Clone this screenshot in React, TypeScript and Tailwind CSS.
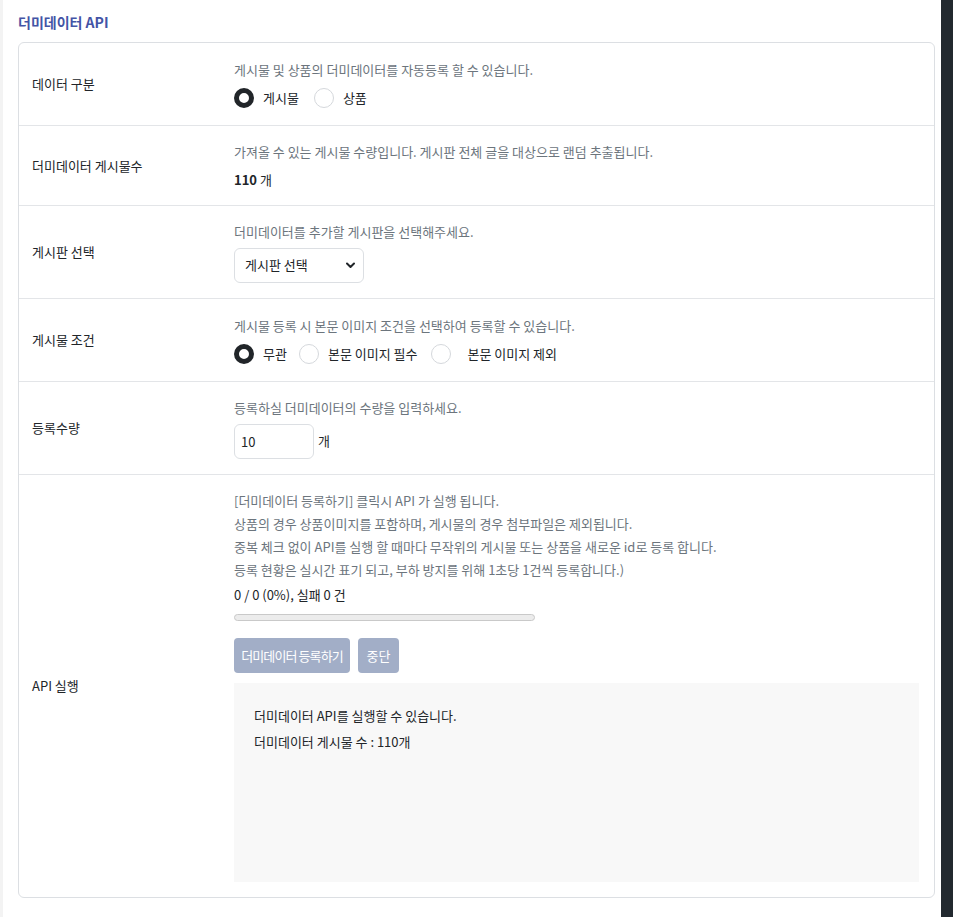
import { useState } from "react";

const font = { fontFamily: '"Noto Sans CJK KR", "Noto Sans", sans-serif' };

function Radio({ checked, label, className = "" }: { checked?: boolean; label: string; className?: string }) {
  return (
    <label className={`flex items-center ${className}`}>
      {checked ? (
        <span className="h-[20px] w-[20px] rounded-full border-[5px] border-[#212529] bg-white" />
      ) : (
        <span className="h-[20px] w-[20px] rounded-full border border-[#d5d8dc] bg-white" />
      )}
      <span className="ml-[9px] text-[13px] text-[#212529]">{label}</span>
    </label>
  );
}

function Row({
  label,
  children,
  last,
  height,
}: {
  label: string;
  children: React.ReactNode;
  last?: boolean;
  height: string;
}) {
  return (
    <div className={`flex ${height} ${last ? "" : "border-b border-[#e3e5e8]"}`}>
      <div className="flex w-[215px] shrink-0 items-center pl-[13px] text-[13px] text-[#212529]">{label}</div>
      <div className="flex flex-1 flex-col justify-center">{children}</div>
    </div>
  );
}

export default function App() {
  const [count, setCount] = useState("10");

  return (
    <div className="flex h-screen w-full bg-white leading-[20px]" style={font}>
      <div className="w-[3px] bg-[#f3f3f3]" />
      <div className="flex-1 pl-[15px] pr-[6px]">
        <h1 className="pt-[12px] pb-[10px] text-[14px] font-bold text-[#4354a6]">더미데이터 API</h1>
        <div className="rounded-[6px] border border-[#dcdfe3] bg-white">
          <Row label="데이터 구분" height="h-[83px]">
            <p className="text-[13px] text-[#6c757d]">게시물 및 상품의 더미데이터를 자동등록 할 수 있습니다.</p>
            <div className="mt-[8px] flex items-center">
              <Radio checked label="게시물" />
              <Radio label="상품" className="ml-[15px]" />
            </div>
          </Row>
          <Row label="더미데이터 게시물수" height="h-[80px]">
            <p className="text-[13px] text-[#6c757d]">
              가져올 수 있는 게시물 수량입니다. 게시판 전체 글을 대상으로 랜덤 추출됩니다.
            </p>
            <p className="mt-[8px] text-[13px] text-[#212529]">
              <b>110</b> 개
            </p>
          </Row>
          <Row label="게시판 선택" height="h-[93px]">
            <p className="text-[13px] text-[#6c757d]">더미데이터를 추가할 게시판을 선택해주세요.</p>
            <div className="relative mt-[6px] flex h-[35px] w-[130px] items-center rounded-[6px] border border-[#dcdfe3] pl-[10px] text-[13px] text-[#212529]">
              게시판 선택
              <svg className="absolute right-[8px] top-[13px]" width="9" height="7" viewBox="0 0 9 7">
                <path d="M1 1.5 L4.5 5 L8 1.5" fill="none" stroke="#212529" strokeWidth="2" strokeLinecap="round" strokeLinejoin="round" />
              </svg>
            </div>
          </Row>
          <Row label="게시물 조건" height="h-[83px]">
            <p className="text-[13px] text-[#6c757d]">게시물 등록 시 본문 이미지 조건을 선택하여 등록할 수 있습니다.</p>
            <div className="mt-[8px] flex items-center">
              <Radio checked label="무관" />
              <Radio label="본문 이미지 필수" className="ml-[12px]" />
              <Radio label=" 본문 이미지 제외" className="ml-[14px] [&>span:last-child]:ml-[16px]" />
            </div>
          </Row>
          <Row label="등록수량" height="h-[93px]">
            <p className="text-[13px] text-[#6c757d]">등록하실 더미데이터의 수량을 입력하세요.</p>
            <div className="mt-[6px] flex items-center">
              <input
                value={count}
                onChange={(e) => setCount(e.target.value)}
                className="h-[35px] w-[80px] rounded-[6px] border border-[#dcdfe3] px-[6px] text-[13px] text-[#212529] outline-none"
                style={font}
              />
              <span className="ml-[4px] text-[13px] text-[#212529]">개</span>
            </div>
          </Row>
          <Row label="API 실행" height="h-[422px]" last>
            <div className="flex h-full flex-col pt-[14px] pr-[15px] pb-[15px]">
              <div className="text-[13px] leading-[23px] text-[#6c757d]">
                <p>[더미데이터 등록하기] 클릭시 API 가 실행 됩니다.</p>
                <p>상품의 경우 상품이미지를 포함하며, 게시물의 경우 첨부파일은 제외됩니다.</p>
                <p>중복 체크 없이 API를 실행 할 때마다 무작위의 게시물 또는 상품을 새로운 id로 등록 합니다.</p>
                <p>등록 현황은 실시간 표기 되고, 부하 방지를 위해 1초당 1건씩 등록합니다.)</p>
              </div>
              <p className="mt-[4px] text-[13px] text-[#212529]">0 / 0 (0%), 실패 0 건</p>
              <div className="mt-[9px] h-[7px] w-[301px] rounded-full border border-[#c9c9c9] bg-[#ececec]" />
              <div className="mt-[17px] flex gap-[8px]">
                <button
                  className="h-[35px] w-[116px] whitespace-nowrap rounded-[4px] bg-[#a2aec7] text-[13px] tracking-[-0.9px] text-white"
                  style={font}
                >
                  더미데이터 등록하기
                </button>
                <button className="h-[35px] w-[41px] rounded-[4px] bg-[#a2aec7] text-[13px] text-white" style={font}>
                  중단
                </button>
              </div>
              <div className="mt-[10px] flex-1 bg-[#f8f8f8] px-[20px] pt-[20px] text-[13px] leading-[26px] text-[#212529]">
                <p>더미데이터 API를 실행할 수 있습니다.</p>
                <p>더미데이터 게시물 수 : 110개</p>
              </div>
            </div>
          </Row>
        </div>
      </div>
      <div className="w-[12px] bg-[#22292f]" />
    </div>
  );
}
